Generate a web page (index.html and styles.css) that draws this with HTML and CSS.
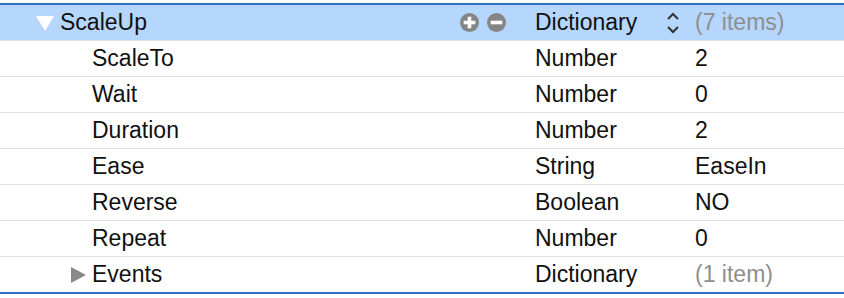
FILE: index.html
```html
<!DOCTYPE html>
<html lang="en">
<head>
    <meta charset="UTF-8">
    <title>Property List</title>
    <link rel="stylesheet" href="styles.css">
</head>
<body>

    <div class="plist">
        <!-- Parent row (selected) -->
        <div class="row selected">
            <div class="key level-0">
                <span class="disclosure open"></span>
                <span class="key-text">ScaleUp</span>
                <span class="row-buttons">
                    <svg class="row-btn" viewBox="0 0 18 18"><circle cx="9" cy="9" r="9" fill="#858585"/><rect x="3.5" y="7.3" width="11" height="3.4" fill="#fff"/><rect x="7.3" y="3.5" width="3.4" height="11" fill="#fff"/></svg>
                    <svg class="row-btn" viewBox="0 0 18 18"><circle cx="9" cy="9" r="9" fill="#858585"/><rect x="3.5" y="7.3" width="11" height="3.4" fill="#fff"/></svg>
                </span>
            </div>
            <div class="type">Dictionary
                <svg class="stepper" width="14" height="24" viewBox="0 0 14 24"><polyline points="2,8 7,3 12,8" fill="none" stroke="#333" stroke-width="2"/><polyline points="2,16 7,21 12,16" fill="none" stroke="#333" stroke-width="2"/></svg>
            </div>
            <div class="value muted">(7 items)</div>
        </div>

        <div class="row">
            <div class="key level-1"><span class="key-text">ScaleTo</span></div>
            <div class="type">Number</div>
            <div class="value">2</div>
        </div>
        <div class="row">
            <div class="key level-1"><span class="key-text">Wait</span></div>
            <div class="type">Number</div>
            <div class="value">0</div>
        </div>
        <div class="row">
            <div class="key level-1"><span class="key-text">Duration</span></div>
            <div class="type">Number</div>
            <div class="value">2</div>
        </div>
        <div class="row">
            <div class="key level-1"><span class="key-text">Ease</span></div>
            <div class="type">String</div>
            <div class="value">EaseIn</div>
        </div>
        <div class="row">
            <div class="key level-1"><span class="key-text">Reverse</span></div>
            <div class="type">Boolean</div>
            <div class="value">NO</div>
        </div>
        <div class="row">
            <div class="key level-1"><span class="key-text">Repeat</span></div>
            <div class="type">Number</div>
            <div class="value">0</div>
        </div>
        <div class="row">
            <div class="key level-1 has-children">
                <span class="disclosure closed"></span>
                <span class="key-text">Events</span>
            </div>
            <div class="type">Dictionary</div>
            <div class="value muted">(1 item)</div>
        </div>
    </div>

</body>
</html>
```

FILE: styles.css
```css
/* General Styles */
body {
    font-family: "Liberation Sans", Arial, sans-serif;
    background-color: #fff;
    margin: 0;
    padding: 3px 0 0 0;
    color: #111;
}

.plist {
    border-top: 2px solid #2e6fc7;
    border-bottom: 2px solid #2e6fc7;
}

.row {
    display: grid;
    grid-template-columns: 535px 160px 1fr;
    align-items: center;
    height: 35px;
    border-bottom: 1px solid #e4e4e4;
    font-size: 23px;
}

.row:last-child {
    border-bottom: none;
}

.row.selected {
    background-color: #b5d6fd;
}

.key {
    display: flex;
    align-items: center;
    height: 100%;
}

.level-0 {
    padding-left: 36px;
}

.level-1 {
    padding-left: 92px;
}

.level-1.has-children {
    padding-left: 71px;
}

.disclosure {
    display: inline-block;
    width: 0;
    height: 0;
}

.disclosure.open {
    border-left: 9px solid transparent;
    border-right: 9px solid transparent;
    border-top: 15px solid #fff;
    margin-right: 6px;
    margin-top: 2px;
}

.disclosure.closed {
    border-top: 8px solid transparent;
    border-bottom: 8px solid transparent;
    border-left: 15px solid #8a8a8a;
    margin-right: 6px;
}

.row-buttons {
    display: flex;
    gap: 8px;
    margin-left: auto;
    margin-right: 29px;
}

.row-btn {
    display: block;
    flex-shrink: 0;
    width: 19px;
    height: 19px;
}

.type {
    display: flex;
    align-items: center;
}

.stepper {
    margin-left: auto;
    margin-right: 15px;
}

.muted {
    color: #8e8e8e;
}
```
